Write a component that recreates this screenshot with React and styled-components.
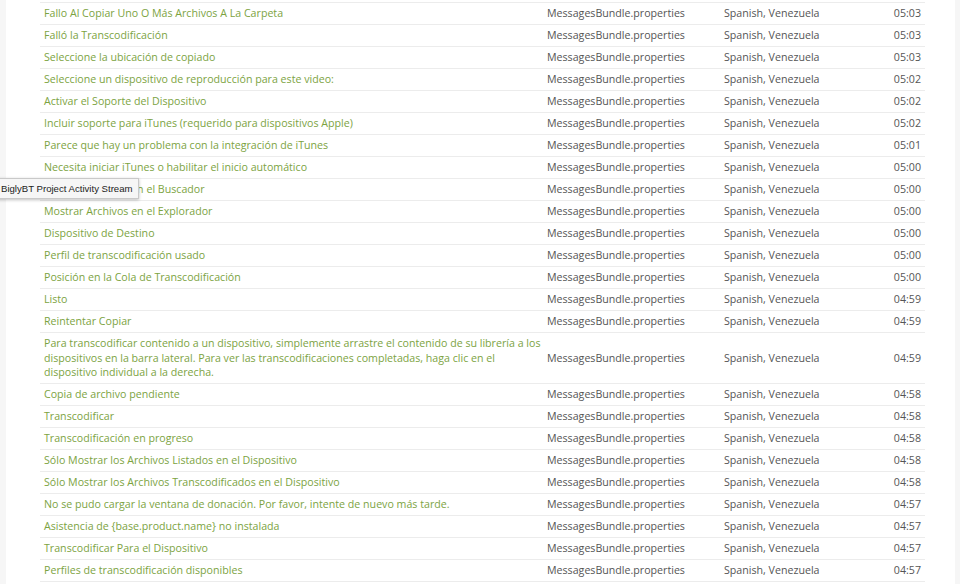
import React from "react";
import styled, { createGlobalStyle } from "styled-components";

const Global = createGlobalStyle`
  html, body { margin: 0; padding: 0; background: #f6f6f6; }
  body { font-family: "Open Sans", "Noto Sans", sans-serif; overflow: hidden; }
`;

const Page = styled.div`
  position: relative;
  margin: 0 5px 0 6px;
  background: #ffffff;
  padding: 2px 30px 0 34px;
  height: 584px;
  box-sizing: border-box;
`;

const Table = styled.div`
  display: flex;
  flex-direction: column;
`;

const Row = styled.div`
  display: grid;
  grid-template-columns: 503px 177px 1fr 60px;
  align-items: center;
  border-top: 1px solid #ececec;
  &:last-child { border-bottom: 1px solid #ececec; }
  font-size: 10.65px;
  line-height: 14.5px;
`;

const Cell = styled.div`
  padding: 3.25px ${(p) => (p.$accent ? "0" : "4px")} 3.25px 4px;
  color: ${(p) => (p.$accent ? "#7ca33f" : "#555555")};
  text-align: ${(p) => (p.$right ? "right" : "left")};
`;

const Tooltip = styled.div`
  position: absolute;
  left: -6px;
  top: 178px;
  padding: 4px 5px 3px 6px;
  background: #f6f6f6;
  border: 1px solid #c9c9c9;
  box-shadow: 0 1px 3px rgba(0, 0, 0, 0.25);
  font-family: "Liberation Sans", "DejaVu Sans", sans-serif;
  font-size: 9.6px;
  line-height: 12px;
  color: #222;
  white-space: nowrap;
`;

const rows = [
  ["Fallo Al Copiar Uno O Más Archivos A La Carpeta", "05:03"],
  ["Falló la Transcodificación", "05:03"],
  ["Seleccione la ubicación de copiado", "05:03"],
  ["Seleccione un dispositivo de reproducción para este video:", "05:02"],
  ["Activar el Soporte del Dispositivo", "05:02"],
  ["Incluir soporte para iTunes (requerido para dispositivos Apple)", "05:02"],
  ["Parece que hay un problema con la integración de iTunes", "05:01"],
  ["Necesita iniciar iTunes o habilitar el inicio automático", "05:00"],
  ["Mostrar Archivos en el Buscador", "05:00"],
  ["Mostrar Archivos en el Explorador", "05:00"],
  ["Dispositivo de Destino", "05:00"],
  ["Perfil de transcodificación usado", "05:00"],
  ["Posición en la Cola de Transcodificación", "05:00"],
  ["Listo", "04:59"],
  ["Reintentar Copiar", "04:59"],
  ["Para transcodificar contenido a un dispositivo, simplemente arrastre el contenido de su librería a los dispositivos en la barra lateral. Para ver las transcodificaciones completadas, haga clic en el dispositivo individual a la derecha.", "04:59"],
  ["Copia de archivo pendiente", "04:58"],
  ["Transcodificar", "04:58"],
  ["Transcodificación en progreso", "04:58"],
  ["Sólo Mostrar los Archivos Listados en el Dispositivo", "04:58"],
  ["Sólo Mostrar los Archivos Transcodificados en el Dispositivo", "04:58"],
  ["No se pudo cargar la ventana de donación. Por favor, intente de nuevo más tarde.", "04:57"],
  ["Asistencia de {base.product.name} no instalada", "04:57"],
  ["Transcodificar Para el Dispositivo", "04:57"],
  ["Perfiles de transcodificación disponibles", "04:57"],
];

export default function App() {
  return (
    <>
      <Global />
      <Page>
        <Table>
          {rows.map(([text, time], i) => (
            <Row key={i}>
              <Cell $accent>{text}</Cell>
              <Cell>MessagesBundle.properties</Cell>
              <Cell>Spanish, Venezuela</Cell>
              <Cell $right>{time}</Cell>
            </Row>
          ))}
        </Table>
      </Page>
      <Tooltip>BiglyBT Project Activity Stream</Tooltip>
    </>
  );
}
